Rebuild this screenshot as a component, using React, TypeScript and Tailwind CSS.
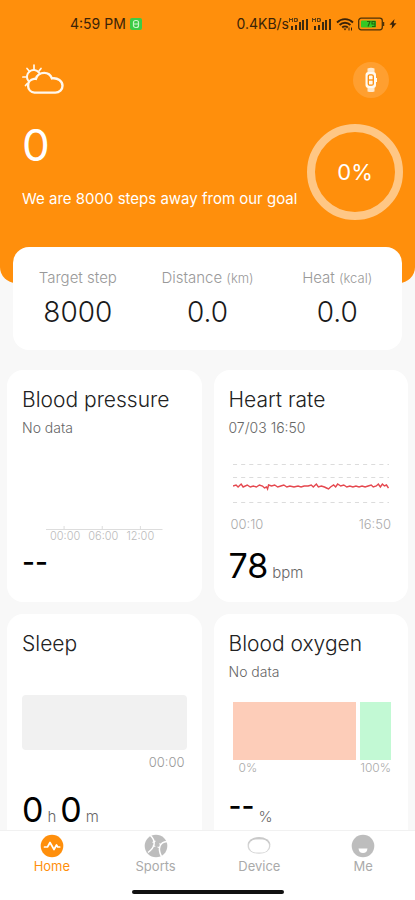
import type { ReactNode } from "react";

const heartPoints =
  "0,24 3,23 5,25 8,22 10,25 14,23 17,25 20,24 23,25 26,23 29,24 31,26 33,25 34,27 35,23 38,24 41,23 44,25 47,24 50,23 53,25 56,24 60,25 64,24 67,25 70,24 74,24 77,23 79,25 82,22 84,25 87,24 90,25 92,26 94,27 96,25 99,23 101,25 103,22 106,24 109,23 112,25 115,24 118,25 121,24 124,25 127,24 130,25 133,24 136,23 138,25 141,24 143,22 145,25 147,22 149,24 151,23 153,26";

function SignalIcon() {
  return (
    <svg className="w-5 h-3" viewBox="0 0 20 12" fill="#3b2a10" aria-hidden="true">
      <path d="M0 0h1v1h2V0h1v4H3V2H1v2H0zM5 0h3l1 1v2l-1 1H5zM6 1v2h1.500V1z" opacity=".8" />
      <rect x="2" y="8" width="2" height="4" />
      <rect x="6" y="7" width="2" height="5" />
      <rect x="10" y="4" width="2" height="8" />
      <rect x="13" y="2" width="2" height="10" />
      <rect x="17" y="1" width="2" height="11" />
    </svg>
  );
}

function StatusBar() {
  return (
    <div className="flex items-center justify-between h-12 pl-[70px] pr-[18px] text-sm font-normal text-[#3b2308]">
      <div className="flex items-center gap-1">
        <span>4:59 PM</span>
        <svg className="w-3 h-3" viewBox="0 0 12 12" aria-hidden="true">
          <rect width="12" height="12" rx="2" fill="#3ccb46" />
          <rect x="3.5" y="2.5" width="5" height="7" rx="2" fill="none" stroke="#c9f5c8" strokeWidth="1.2" />
          <path d="M4 6h4" stroke="#c9f5c8" />
        </svg>
      </div>

      <div className="flex items-center gap-[3px]">
        <div className="flex items-center">
          <span>0.4KB/s</span>
          <SignalIcon />
        </div>
        <SignalIcon />
        <svg className="w-5 h-4" viewBox="0 0 20 16" fill="none" stroke="#3b2308" strokeWidth="1.8" aria-hidden="true">
          <path d="M2 6.500c4.500-4.500 11.500-4.500 16 0M4.600 9c3-3 7.800-3 10.800 0M7.200 11.500c1.600-1.600 4-1.600 5.600 0" />
          <path d="M8.500 12.500h3L10 14.500z" fill="#3b2308" stroke="none" />
          <path d="M14 11.500v3M16.500 11.500v3" strokeWidth="1" />
        </svg>
        <svg className="w-7 h-3.5" viewBox="0 0 28 14" aria-hidden="true">
          <rect x="0.700" y="1.200" width="23.600" height="11.600" rx="2.500" fill="none" stroke="#4c3208" strokeWidth="1.300" />
          <rect x="3" y="3.500" width="15" height="7" rx="1" fill="#34c924" />
          <path d="M25.500 5v4" stroke="#4c3208" strokeWidth="1.500" />
          <path d="M9 4.500h3l-2 5M17 7h-3V4.500h3V9.500h-3" fill="none" stroke="#24600e" strokeWidth="1.100" />
        </svg>
        <svg className="w-2 h-3" viewBox="0 0 8 12" fill="#3b2308" aria-hidden="true">
          <path d="M5.500 1L0.500 6.800h2.700L2.500 11l5-5.800H4.700z" />
        </svg>
      </div>
    </div>
  );
}

function WeatherIcon() {
  return (
    <svg className="w-[42px] h-8" viewBox="0 0 42 32" fill="none" stroke="#fff8ee" strokeLinecap="round" role="img" aria-label="Partly cloudy">
      <path
        d="M12.500 28.600a6.900 6.900 0 0 1-.6-13.700 4.600 4.600 0 0 1 2-.1c1.300-3.800 4.600-5.900 8.300-5.900 3.600 0 6.500 2.200 7.700 5.500 5.900-.9 10.600 2.700 10.600 7.300 0 4-3.100 6.900-7.200 6.900z"
        strokeWidth="2.400"
      />
      <path d="M6.400 17A6.700 6.700 0 0 1 17 8.600" strokeWidth="2" />
      <path d="M12 1v4M5 4.500l2.600 3M19 4.500l-2 2.500M.9 13h3M3.500 21.500l1.800-2" strokeWidth="1.700" />
    </svg>
  );
}

function WatchIcon() {
  return (
    <svg className="w-3.5 h-[26px]" viewBox="0 0 14 26" aria-hidden="true">
      <path d="M3.500 1.500Q7-.200 10.500 1.500V6H3.500zM3.500 20h7v4.500q-3.500 1.200-7 0z" fill="#ffe9cd" />
      <rect x="1.500" y="5" width="10.500" height="16" rx="3" fill="#fffaf2" />
      <path d="M12 11h1v4h-1z" fill="#fffaf2" />
      <rect x="4.300" y="7.800" width="5" height="10.400" rx="1.500" fill="none" stroke="#ff8f0c" strokeWidth="1.300" />
      <path d="M4.300 13h5" stroke="#ff8f0c" strokeWidth="1.300" />
    </svg>
  );
}

function Stat({ label, unit, value }: { label: string; unit?: string; value: string }) {
  return (
    <div className="flex-1 flex flex-col items-center">
      <dt className="text-[15px] leading-5 text-[#999] whitespace-nowrap">
        {label} {unit && <span className="text-[13px]">({unit})</span>}
      </dt>
      <dd className="text-[28px] leading-9 text-[#1a1a1a] mt-1.5">{value}</dd>
    </div>
  );
}

type CardProps = {
  title: string;
  subtitle?: string;
  chart: ReactNode;
  children: ReactNode;
};

function Card({ title, subtitle, chart, children }: CardProps) {
  return (
    <section className="flex flex-col bg-white rounded-2xl px-[15px] pt-4 pb-4">
      <h2 className="text-[21px] leading-7 text-[#222] whitespace-nowrap">{title}</h2>
      <p className="h-5 mt-1 text-sm leading-5 text-[#666]">{subtitle}</p>
      <div className="flex flex-col justify-end h-[104px]">{chart}</div>
      <p className="flex items-baseline gap-1 h-10 mt-1 text-[15px] text-[#666]">{children}</p>
    </section>
  );
}

function Value({ children }: { children?: ReactNode }) {
  return (
    <span className="text-[34px] leading-10 font-normal text-black">
      {children ?? <span className="align-[6px] text-[28px] leading-none font-medium">--</span>}
    </span>
  );
}

function PressureChart() {
  return (
    <div className="mx-6">
      <svg className="w-full h-1" viewBox="0 0 116 4" preserveAspectRatio="none" stroke="#ddd" aria-hidden="true">
        <path d="M0 3.500h116M18 0v3M56 0v3M94 0v3" />
      </svg>
      <div className="flex gap-2 pl-1 text-[11px] leading-3 text-[#bbb]">
        <span>00:00</span>
        <span>06:00</span>
        <span>12:00</span>
      </div>
    </div>
  );
}

function HeartChart() {
  return (
    <div className="pb-2.5">
      <svg className="w-full h-11 px-1 mb-2.5" viewBox="0 0 154 44" preserveAspectRatio="none" fill="none" aria-hidden="true">
        <path d="M0 2.500h154M0 15.500h154M0 40.500h154" stroke="#dcdcdc" strokeDasharray="4 4" />
        <polyline points={heartPoints} stroke="#e5484f" strokeWidth="1.400" />
      </svg>
      <div className="flex justify-between px-0.5 text-[13px] leading-4 text-[#aaa]">
        <span>00:10</span>
        <span>16:50</span>
      </div>
    </div>
  );
}

function SleepChart() {
  return (
    <div className="pb-4">
      <div className="h-[55px] rounded-sm bg-[#f1f1f1]" />
      <p className="text-right text-[13px] leading-4 text-[#999] mt-1 pr-0.5">00:00</p>
    </div>
  );
}

function OxygenChart() {
  return (
    <div className="pl-1 pr-0.5 pb-2.5">
      <div className="flex gap-1 h-[58px]">
        <div className="flex-4 bg-[#fdcdb9]" />
        <div className="flex-1 bg-[#c2f9d4]" />
      </div>
      <div className="flex justify-between pl-1.5 text-xs leading-4 text-[#aaa]">
        <span>0%</span>
        <span>100%</span>
      </div>
    </div>
  );
}

function HomeIcon() {
  return (
    <svg className="w-6 h-6" viewBox="0 0 24 24" aria-hidden="true">
      <circle cx="12" cy="12" r="11.300" fill="#ff8f0c" />
      <path d="M4.500 13h3L10 8.500l4 7 2.500-4.500 1.200 2h2" fill="none" stroke="#fff" strokeWidth="1.700" strokeLinecap="round" strokeLinejoin="round" />
    </svg>
  );
}

function SportsIcon() {
  return (
    <svg className="w-6 h-6" viewBox="0 0 24 24" aria-hidden="true">
      <circle cx="12" cy="12" r="11.300" fill="#bdbdbd" />
      <path d="M6.500 1.500c5.500 5.500 5 11.500-2.500 17M23 7.500c-7.500.5-9.500 7.500-5.500 15" fill="none" stroke="#fff" strokeWidth="1.500" />
      <path d="M8.500 8.500l3-1.500M8.800 11.500l2.500 1M13.500 13l2.300.8M15.500 9.500l1.500 1.500" stroke="#fff" strokeWidth="1.200" />
    </svg>
  );
}

function DeviceIcon() {
  return (
    <svg className="w-6 h-6" viewBox="0 0 24 24" fill="none" aria-hidden="true">
      <ellipse cx="12" cy="10.500" rx="11.300" ry="7.500" fill="#c9c9c9" />
      <ellipse cx="12" cy="12.500" rx="11.300" ry="7.300" fill="#d6d6d6" />
      <rect x="2" y="5.500" width="20" height="13" rx="6.500" fill="#fff" />
    </svg>
  );
}

function MeIcon() {
  return (
    <svg className="w-6 h-6" viewBox="0 0 24 24" aria-hidden="true">
      <circle cx="12" cy="12" r="11.300" fill="#bdbdbd" />
      <path d="M7.500 14.500h9q-.5 4.500-4.500 4.500t-4.500-4.500z" fill="#fff" />
    </svg>
  );
}

const tabs = [
  { label: "Home", icon: <HomeIcon />, color: "text-[#ff8f0c]" },
  { label: "Sports", icon: <SportsIcon />, color: "text-[#aaa]" },
  { label: "Device", icon: <DeviceIcon />, color: "text-[#aaa]" },
  { label: "Me", icon: <MeIcon />, color: "text-[#aaa]" },
];

export default function App() {
  return (
    <div className="flex flex-col h-dvh bg-[#f8f8f8] font-[Inter,sans-serif] font-light">
      <main className="flex-1 min-h-0 overflow-hidden">
        <header className="bg-[#ff8f0c] rounded-b-2xl pb-[63px] text-white">
          <StatusBar />

          <div className="flex items-center justify-between pl-[22px] pr-[26px] pt-3.5">
            <WeatherIcon />
            <button type="button" aria-label="Connected watch" className="flex items-center justify-center w-9 h-9 rounded-full bg-white/15">
              <WatchIcon />
            </button>
          </div>

          <div className="flex items-start justify-between pl-[22px] pr-3 pt-5">
            <div>
              <h1 className="text-[44px] leading-[54px] font-normal">0</h1>
              <p className="text-[15px] leading-5 font-normal mt-[17px] whitespace-nowrap">We are 8000 steps away from our goal</p>
            </div>
            <div className="shrink-0 flex items-center justify-center w-24 h-24 mt-1.5 rounded-full border-8 border-[#ffc785] text-[22px] font-normal">
              0%
            </div>
          </div>
        </header>

        <dl className="relative flex bg-white rounded-2xl mx-[13px] -mt-9 pt-[21px] pb-5">
          <Stat label="Target step" value="8000" />
          <Stat label="Distance" unit="km" value="0.0" />
          <Stat label="Heat" unit="kcal" value="0.0" />
        </dl>

        <div className="grid grid-cols-2 gap-3 px-[7px] mt-5">
          <Card title="Blood pressure" subtitle="No data" chart={<PressureChart />}>
            <Value />
          </Card>
          <Card title="Heart rate" subtitle="07/03 16:50" chart={<HeartChart />}>
            <Value>78</Value> bpm
          </Card>
          <Card title="Sleep" chart={<SleepChart />}>
            <Value>0</Value> h <Value>0</Value> m
          </Card>
          <Card title="Blood oxygen" subtitle="No data" chart={<OxygenChart />}>
            <Value /> %
          </Card>
        </div>
      </main>

      <footer className="bg-white border-t border-[#f1f1f1] pt-[3px] pb-1.5">
        <nav className="flex">
          {tabs.map((tab) => (
            <a key={tab.label} href="#" className={`flex-1 flex flex-col items-center text-[13px] leading-4 font-normal ${tab.color}`}>
              {tab.icon}
              {tab.label}
            </a>
          ))}
        </nav>
        <div className="w-[152px] h-1 rounded-full bg-[#111] mx-auto mt-4" />
      </footer>
    </div>
  );
}
